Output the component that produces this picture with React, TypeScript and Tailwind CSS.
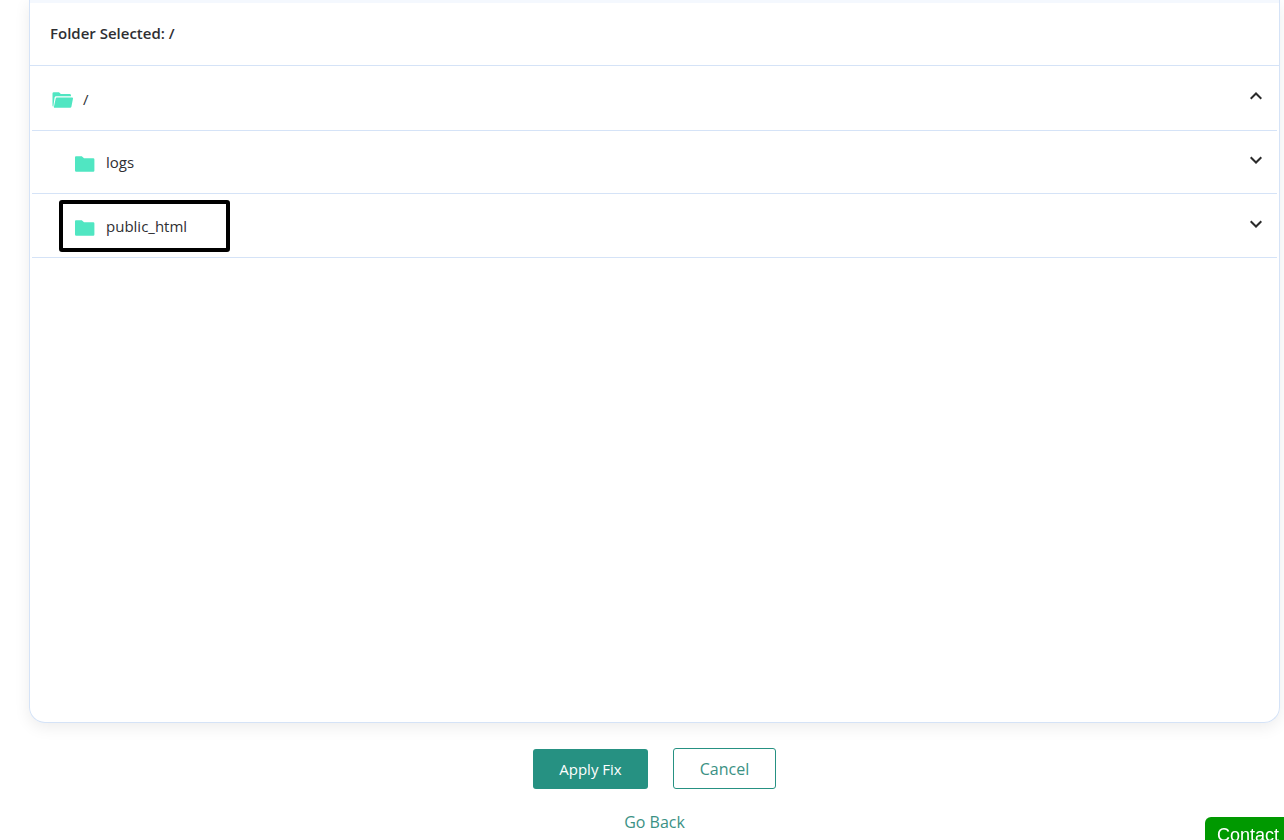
import React, { useState } from "react";

const FolderIcon = () => (
  <svg viewBox="0 0 20 16" className="w-5 h-4" fill="#50e6c2" aria-hidden="true">
    <path d="M1.5 0.3H6.8L9 2.2H18.2A1.2 1.2 0 0 1 19.4 3.4V14.5A1.2 1.2 0 0 1 18.2 15.7H1.2A1.2 1.2 0 0 1 0 14.5V1.5A1.2 1.2 0 0 1 1.5 0.3Z" />
  </svg>
);

const FolderOpenIcon = () => (
  <svg viewBox="0 0 21 16" className="w-[21px] h-4" fill="#50e6c2" aria-hidden="true">
    <path d="M1.8 0.3H7L8.8 2.1H17.6A1.4 1.4 0 0 1 19 3.5V4.2H4.2A1.6 1.6 0 0 0 2.6 5.4L1.3 14.8A1.3 1.3 0 0 1 0.5 13.6V1.6A1.3 1.3 0 0 1 1.8 0.3Z" />
    <path d="M4.8 5.6H20.2A0.8 0.8 0 0 1 21 6.5L19.4 14.8A1.3 1.3 0 0 1 18.1 15.8H2.5A0.7 0.7 0 0 1 1.9 15L3.7 6.5A1.2 1.2 0 0 1 4.8 5.6Z" />
  </svg>
);

const Chevron = ({ up = false }: { up?: boolean }) => (
  <svg
    viewBox="0 0 12 8"
    className={up ? "w-3 h-2" : "w-3 h-2 rotate-180"}
    fill="none"
    stroke="#2b2b2b"
    strokeWidth="2"
    aria-hidden="true"
  >
    <path d="M0.7 6.8L6 1.5L11.3 6.8" />
  </svg>
);

const folders = ["logs", "public_html"];

const App = () => {
  const [selected, setSelected] = useState("/");
  const [open, setOpen] = useState(true);

  return (
    <div className="font-['Open_Sans',sans-serif] text-[#2f2f33] bg-white">
      <main className="ml-[29px] mr-1">
        <section className="flex flex-col min-h-[723px] rounded-b-2xl border border-t-0 border-[#d5e3f7] shadow-[0_4px_16px_rgba(0,0,0,0.08)]">
          <div className="h-[3px] bg-[#f4f8fe]" />
          <h2 className="h-[63px] flex items-center px-5 pb-0.5 border-b border-[#d5e3f7] text-[15px] font-semibold">
            Folder Selected: {selected}
          </h2>
          <ul className="px-0.5 text-[15px]">
            <li>
              <div className="h-[65px] flex items-center justify-between pl-5 pr-[15px] pt-1 border-b border-[#d5e3f7]">
                <button className="flex items-center gap-2.5" onClick={() => setSelected("/")}>
                  <FolderOpenIcon />
                  <span className="pb-0.5">/</span>
                </button>
                <button className="pb-2" aria-label="Toggle /" onClick={() => setOpen(!open)}>
                  <Chevron up={open} />
                </button>
              </div>
              {open && (
                <ul className="-mt-px">
                  {folders.map((name) => (
                    <li
                      key={name}
                      className="relative h-16 flex items-center justify-between pl-[43px] pr-[15px] pt-1 border-b border-[#d5e3f7]"
                    >
                      <button
                        className="flex items-center gap-[11px]"
                        onClick={() => setSelected(name)}
                      >
                        <FolderIcon />
                        <span className="pb-0.5">{name}</span>
                      </button>
                      <button className="pb-2" aria-label={`Expand ${name}`}>
                        <Chevron />
                      </button>
                      {name === "public_html" && (
                        <span className="absolute left-[27px] top-1.5 w-[171px] h-[52px] border-4 border-black rounded-[3px] pointer-events-none" />
                      )}
                    </li>
                  ))}
                </ul>
              )}
            </li>
          </ul>
        </section>

        <div className="mt-[25px] flex items-end justify-center gap-[25px]">
          <button className="h-10 w-[115px] rounded-[3px] bg-[#269182] text-white text-[15px]">
            Apply Fix
          </button>
          <button className="h-[41px] w-[103px] rounded-[3px] border border-[#269182] text-[#3b9184] text-base">
            Cancel
          </button>
        </div>
        <div className="mt-5 flex justify-center">
          <a href="#back" className="h-[31px] leading-[26px] text-[#3b9184] text-base">
            Go Back
          </a>
        </div>
      </main>

      <button className="fixed right-0 bottom-0 h-[23px] w-[79px] rounded-tl-md bg-[#009900] pl-3 pt-2 text-left leading-5 text-white text-lg/5 font-['Liberation_Sans',Arial,sans-serif]">
        Contact
      </button>
    </div>
  );
};

export default App;
